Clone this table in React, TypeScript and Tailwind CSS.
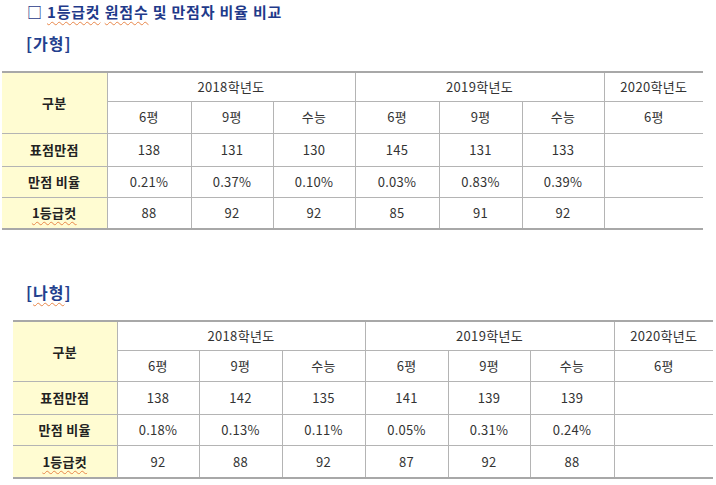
import React from "react";

type Block = {
  label: string;
  wavyLabel?: boolean;
  offset: string;
  widths: string[];
  heights: string[];
  rows: { name: string; wavy?: boolean; values: string[] }[];
};

const subHeads = ["6평", "9평", "수능", "6평", "9평", "수능", "6평"];

const blocks: Block[] = [
  {
    label: "가형",
    offset: "ml-[2px] w-[701px] mt-[18px]",
    widths: ["w-[105px]", "w-[84px]", "w-[82px]", "w-[82px]", "w-[84px]", "w-[83px]", "w-[82px]", "w-[99px]"],
    heights: ["h-[29px]", "h-[32px]", "h-[33px]", "h-[31px]", "h-[32px]"],
    rows: [
      { name: "표점만점", values: ["138", "131", "130", "145", "131", "133", ""] },
      { name: "만점 비율", values: ["0.21%", "0.37%", "0.10%", "0.03%", "0.83%", "0.39%", ""] },
      { name: "1등급컷", wavy: true, values: ["88", "92", "92", "85", "91", "92", ""] },
    ],
  },
  {
    label: "나형",
    wavyLabel: true,
    offset: "ml-[13px] w-[700px] mt-[18px]",
    widths: ["w-[104px]", "w-[82px]", "w-[83px]", "w-[83px]", "w-[83px]", "w-[82px]", "w-[84px]", "w-[99px]"],
    heights: ["h-[29px]", "h-[31px]", "h-[33px]", "h-[31px]", "h-[33px]"],
    rows: [
      { name: "표점만점", values: ["138", "142", "135", "141", "139", "139", ""] },
      { name: "만점 비율", values: ["0.18%", "0.13%", "0.11%", "0.05%", "0.31%", "0.24%", ""] },
      { name: "1등급컷", wavy: true, values: ["92", "88", "92", "87", "92", "88", ""] },
    ],
  },
];

const wavy = "underline decoration-wavy decoration-[#e8874a] decoration-1 underline-offset-[3px]";
const cell = "border border-[#b4b4b4] text-center align-middle p-0";

const ScoreTable: React.FC<{ block: Block }> = ({ block }) => (
  <table className={`${block.offset} table-fixed border-collapse border-t-[2px] border-b-[2px] border-t-[#a8a8a8] border-b-[#a8a8a8] text-[13px] tracking-[0.3px] text-[#333]`}>
    <colgroup>
      {block.widths.map((w, i) => (
        <col key={i} className={w} />
      ))}
    </colgroup>
    <tbody>
      <tr className={block.heights[0]}>
        <td rowSpan={2} className={`${cell} border-l-0 bg-[#fffcd2] font-bold text-[#222]`}>
          구분
        </td>
        <td colSpan={3} className={cell}>2018학년도</td>
        <td colSpan={3} className={cell}>2019학년도</td>
        <td className={`${cell} border-r-0`}>2020학년도</td>
      </tr>
      <tr className={block.heights[1]}>
        {subHeads.map((h, i) => (
          <td key={i} className={`${cell} ${i === 6 ? "border-r-0" : ""}`}>
            {h}
          </td>
        ))}
      </tr>
      {block.rows.map((r, ri) => (
        <tr key={r.name} className={block.heights[ri + 2]}>
          <td className={`${cell} border-l-0 bg-[#fffcd2] font-bold text-[#222]`}>
            <span className={r.wavy ? wavy : ""}>{r.name}</span>
          </td>
          {r.values.map((v, i) => (
            <td key={i} className={`${cell} ${i === 6 ? "border-r-0" : ""}`}>
              {v}
            </td>
          ))}
        </tr>
      ))}
    </tbody>
  </table>
);

export default function App() {
  return (
    <div
      className="w-[716px] h-[485px] bg-white overflow-hidden"
      style={{ fontFamily: '"Noto Sans CJK KR", "Noto Sans", sans-serif' }}
    >
      <div className="pl-[27px] pt-[2px] text-[15px] font-bold leading-[20px] tracking-[0.8px] text-[#1f3a8a]">
        □ <span className={wavy}>1등급컷</span> <span className={wavy}>원점수</span> 및 만점자 비율 비교
      </div>
      <div className="pl-[26px] mt-[11px] text-[16px] font-bold leading-[20px] tracking-[1px] text-[#233f8e]">
        [가형]
      </div>
      <ScoreTable block={blocks[0]} />
      <div className="pl-[26px] mt-[52px] text-[16px] font-bold leading-[20px] tracking-[1px] text-[#233f8e]">
        [<span className={wavy}>나형</span>]
      </div>
      <ScoreTable block={blocks[1]} />
    </div>
  );
}
